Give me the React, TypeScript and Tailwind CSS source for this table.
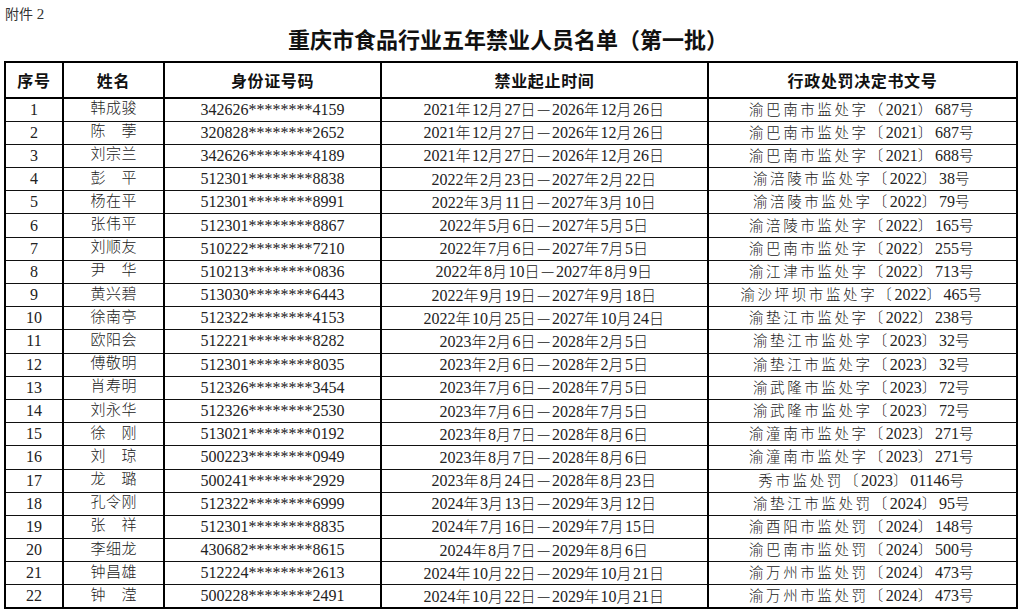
const rows: [string, string, string, string, string][] = [
  ["1", "韩成骏", "342626********4159", "2021年12月27日—2026年12月26日", "渝巴南市监处字（2021）687号"],
  ["2", "陈荸", "320828********2652", "2021年12月27日—2026年12月26日", "渝巴南市监处字〔2021〕687号"],
  ["3", "刘宗兰", "342626********4189", "2021年12月27日—2026年12月26日", "渝巴南市监处字〔2021〕688号"],
  ["4", "彭平", "512301********8838", "2022年2月23日—2027年2月22日", "渝涪陵市监处字〔2022〕38号"],
  ["5", "杨在平", "512301********8991", "2022年3月11日—2027年3月10日", "渝涪陵市监处字〔2022〕79号"],
  ["6", "张伟平", "512301********8867", "2022年5月6日—2027年5月5日", "渝涪陵市监处字〔2022〕165号"],
  ["7", "刘顺友", "510222********7210", "2022年7月6日—2027年7月5日", "渝巴南市监处字〔2022〕255号"],
  ["8", "尹华", "510213********0836", "2022年8月10日—2027年8月9日", "渝江津市监处字〔2022〕713号"],
  ["9", "黄兴碧", "513030********6443", "2022年9月19日—2027年9月18日", "渝沙坪坝市监处字〔2022〕465号"],
  ["10", "徐南亭", "512322********4153", "2022年10月25日—2027年10月24日", "渝垫江市监处字〔2022〕238号"],
  ["11", "欧阳会", "512221********8282", "2023年2月6日—2028年2月5日", "渝垫江市监处字〔2023〕32号"],
  ["12", "傅敬明", "512301********8035", "2023年2月6日—2028年2月5日", "渝垫江市监处字〔2023〕32号"],
  ["13", "肖寿明", "512326********3454", "2023年7月6日—2028年7月5日", "渝武隆市监处字〔2023〕72号"],
  ["14", "刘永华", "512326********2530", "2023年7月6日—2028年7月5日", "渝武隆市监处字〔2023〕72号"],
  ["15", "徐刚", "513021********0192", "2023年8月7日—2028年8月6日", "渝潼南市监处字〔2023〕271号"],
  ["16", "刘琼", "500223********0949", "2023年8月7日—2028年8月6日", "渝潼南市监处字〔2023〕271号"],
  ["17", "龙璐", "500241********2929", "2023年8月24日—2028年8月23日", "秀市监处罚〔2023〕01146号"],
  ["18", "孔令刚", "512322********6999", "2024年3月13日—2029年3月12日", "渝垫江市监处罚〔2024〕95号"],
  ["19", "张祥", "512301********8835", "2024年7月16日—2029年7月15日", "渝酉阳市监处罚〔2024〕148号"],
  ["20", "李细龙", "430682********8615", "2024年8月7日—2029年8月6日", "渝巴南市监处罚〔2024〕500号"],
  ["21", "钟昌雄", "512224********2613", "2024年10月22日—2029年10月21日", "渝万州市监处罚〔2024〕473号"],
  ["22", "钟滢", "500228********2491", "2024年10月22日—2029年10月21日", "渝万州市监处罚〔2024〕473号"],
];

const serif = "font-['Liberation_Serif','Noto_Sans_CJK_SC',serif]";
const sans = "font-['Noto_Sans_CJK_SC',sans-serif]";

// Splits text into runs of CJK glyphs and Latin digits so each can be styled.
function Runs({ text, cjk }: { text: string; cjk: string }) {
  const parts = text.match(/[0-9*]+|[^0-9*]+/g) ?? [];
  return (
    <>
      {parts.map((p, i) =>
        /^[0-9*]/.test(p) ? (
          <span key={i}>{p}</span>
        ) : (
          <span key={i} className={cjk}>
            {p}
          </span>
        ),
      )}
    </>
  );
}

function Name({ name }: { name: string }) {
  return (
    <span className={`relative -top-[2px] inline-flex w-[46px] justify-between text-[15px] ${sans} font-light`}>
      {name.split("").map((c, i) => (
        <span key={i}>{c}</span>
      ))}
    </span>
  );
}

export default function App() {
  const th = `border-2 border-black font-bold text-[16px] text-[#111] ${sans} tracking-[0.04em]`;
  const td = "border-x-2 border-y border-x-black border-y-[#111] p-0 text-center leading-none";
  return (
    <div className="h-[613px] w-[1020px] overflow-hidden bg-white text-[#222]">
      <div className={`h-[61px] px-[5px] pt-[3px] ${sans}`}>
        <div className="text-[14px] leading-[20px] text-[#333]">
          附件<span className={`${serif} text-[15px]`}> 2</span>
        </div>
        <div className="pr-[4px] text-center text-[22px] font-bold leading-[28px] text-[#111]">
          重庆市食品行业五年禁业人员名单（第一批）
        </div>
      </div>
      <table className="ml-[4px] w-[1012px] table-fixed border-collapse border-2 border-black">
        <colgroup>
          <col className="w-[58px]" />
          <col className="w-[101px]" />
          <col className="w-[217px]" />
          <col className="w-[327px]" />
          <col className="w-[309px]" />
        </colgroup>
        <thead>
          <tr className="h-[36px]">
            <th className={th}>序号</th>
            <th className={th}>姓名</th>
            <th className={th}>身份证号码</th>
            <th className={th}>禁业起止时间</th>
            <th className={th}>行政处罚决定书文号</th>
          </tr>
        </thead>
        <tbody className={`${serif} text-[16px]`}>
          {rows.map((r) => (
            <tr key={r[0]} className="h-[23.2px]">
              <td className={td}>{r[0]}</td>
              <td className={td}>
                <Name name={r[1]} />
              </td>
              <td className={td}>{r[2]}</td>
              <td className={td}>
                <Runs text={r[3]} cjk={`${sans} text-[15px] font-light tracking-[0.1em]`} />
              </td>
              <td className={td}>
                <Runs text={r[4]} cjk={`${sans} text-[14.5px] font-light tracking-[0.18em]`} />
              </td>
            </tr>
          ))}
        </tbody>
      </table>
    </div>
  );
}
